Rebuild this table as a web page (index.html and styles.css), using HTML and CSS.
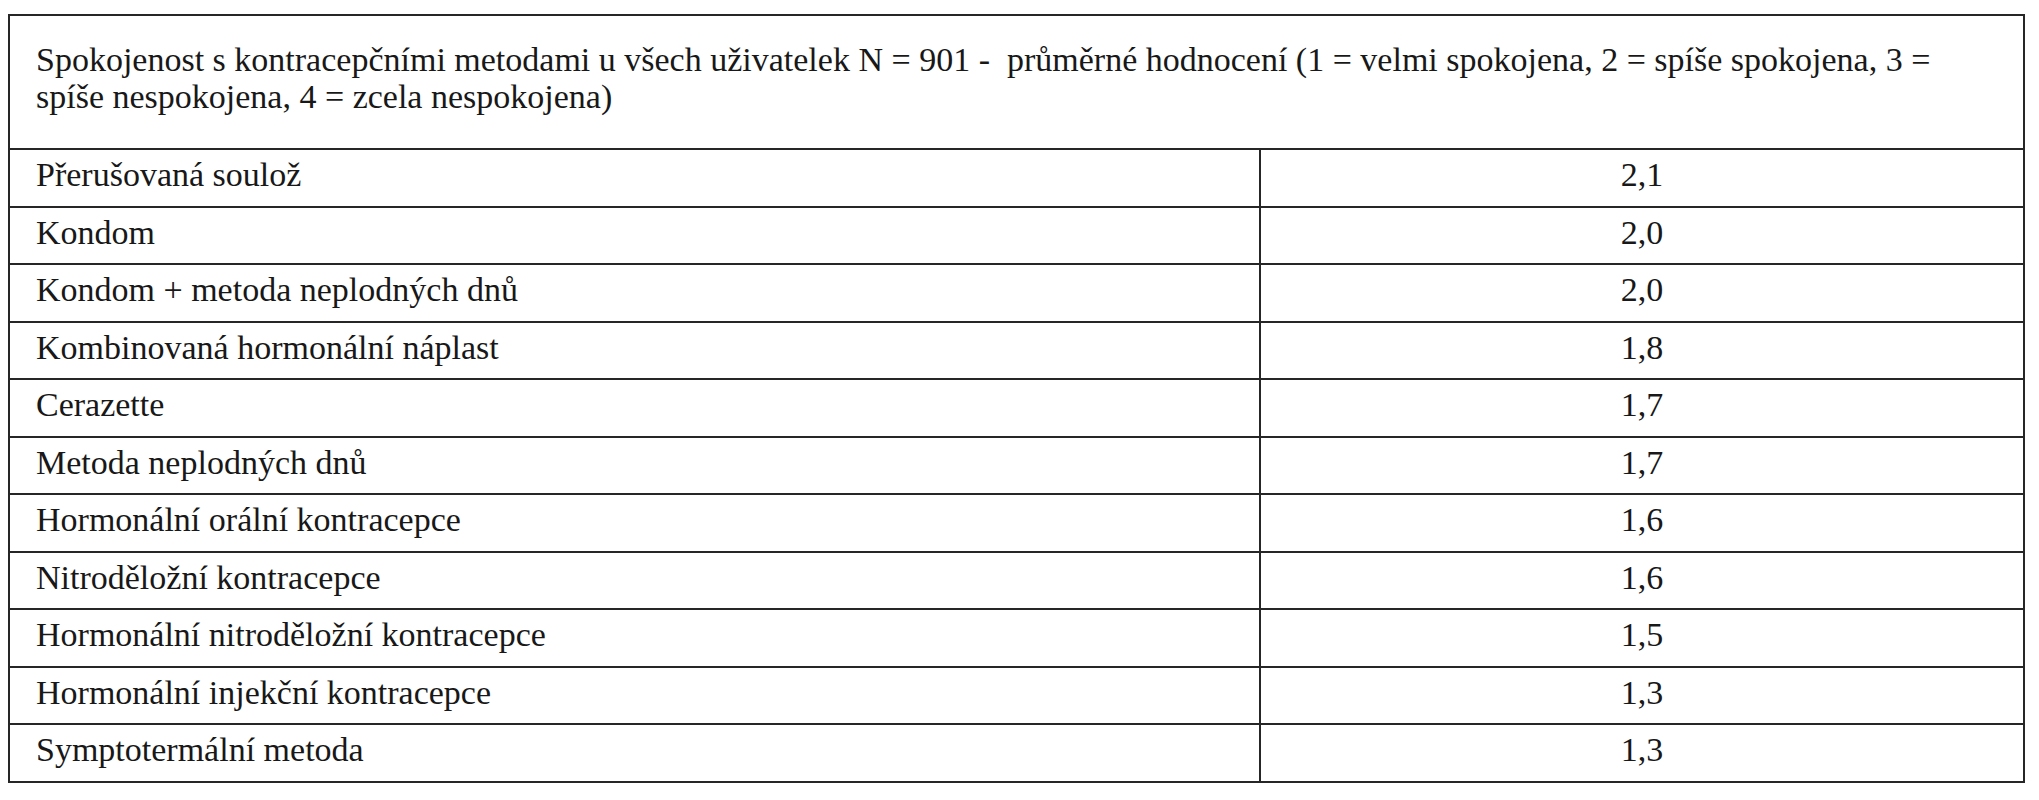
FILE: index.html
```html
<!DOCTYPE html>
<html lang="cs">
<head>
<meta charset="utf-8">
<title>Spokojenost s kontracepčními metodami</title>
<link rel="stylesheet" href="styles.css">
</head>
<body>
<table class="data">
  <colgroup>
    <col class="col-name">
    <col class="col-value">
  </colgroup>
  <thead>
    <tr>
      <th colspan="2" class="caption-cell">Spokojenost s kontracepčními metodami u všech uživatelek N = 901 - &nbsp;průměrné hodnocení (1 = velmi spokojena, 2 = spíše spokojena, 3 = spíše nespokojena, 4 = zcela nespokojena)</th>
    </tr>
  </thead>
  <tbody>
    <tr><td class="name">Přerušovaná soulož</td><td class="value">2,1</td></tr>
    <tr><td class="name">Kondom</td><td class="value">2,0</td></tr>
    <tr><td class="name">Kondom + metoda neplodných dnů</td><td class="value">2,0</td></tr>
    <tr><td class="name">Kombinovaná hormonální náplast</td><td class="value">1,8</td></tr>
    <tr><td class="name">Cerazette</td><td class="value">1,7</td></tr>
    <tr><td class="name">Metoda neplodných dnů</td><td class="value">1,7</td></tr>
    <tr><td class="name">Hormonální orální kontracepce</td><td class="value">1,6</td></tr>
    <tr><td class="name">Nitroděložní kontracepce</td><td class="value">1,6</td></tr>
    <tr><td class="name">Hormonální nitroděložní kontracepce</td><td class="value">1,5</td></tr>
    <tr><td class="name">Hormonální injekční kontracepce</td><td class="value">1,3</td></tr>
    <tr><td class="name">Symptotermální metoda</td><td class="value">1,3</td></tr>
  </tbody>
</table>
</body>
</html>
```

FILE: styles.css
```css
html, body {
  background: #ffffff;
}

body {
  margin: 14px 8px 0 8px;
  color: #181818;
}

.data {
  border-collapse: collapse;
  table-layout: fixed;
  width: 2015px;
  font-family: "Liberation Serif", "Times New Roman", "DejaVu Serif", serif;
  font-size: 34px;
  line-height: 37px;
}

.col-name {
  width: 1251px;
}

.col-value {
  width: 764px;
}

.data th,
.data td {
  border: 2px solid #262626;
  font-family: inherit;
}

.caption-cell {
  font-weight: normal;
  text-align: left;
  padding: 25px 40px 33px 26px;
}

.name {
  text-align: left;
  padding: 6px 26px 12.5px 26px;
}

.value {
  text-align: center;
  padding: 6px 0 12.5px 0;
}
```
